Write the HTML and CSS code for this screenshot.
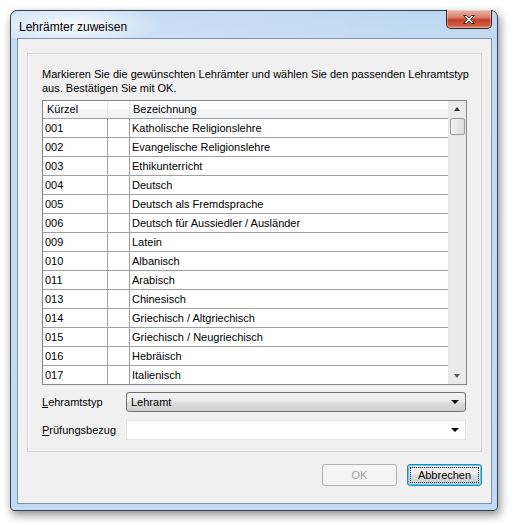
FILE: index.html
```html
<!DOCTYPE html>
<html lang="de">
<head>
<meta charset="utf-8">
<title>Lehrämter zuweisen</title>
<link rel="stylesheet" href="styles.css">
</head>
<body>
<div class="window">
  <div class="titlebar">
    <span class="title">Lehrämter zuweisen</span>
    <button class="close" aria-label="Schließen">
      <svg width="14" height="11" viewBox="0 0 14 11"><path d="M1.5 1.5h3l2.5 2.5 2.5-2.5h3l-4 4 4 4h-3l-2.5-2.5-2.5 2.5h-3l4-4z" fill="#fff" stroke="#3b2a28" stroke-width="1" stroke-linejoin="round"/></svg>
    </button>
  </div>
  <div class="client">
    <div class="panel">
      <p class="intro">Markieren Sie die gewünschten Lehrämter und wählen Sie den passenden Lehramtstyp aus. Bestätigen Sie mit OK.</p>
      <div class="list">
        <div class="grid">
          <div class="row head"><div class="c1">Kürzel</div><div class="c2"></div><div class="c3">Bezeichnung</div></div>
          <div class="row"><div class="c1">001</div><div class="c2"></div><div class="c3">Katholische Religionslehre</div></div>
          <div class="row"><div class="c1">002</div><div class="c2"></div><div class="c3">Evangelische Religionslehre</div></div>
          <div class="row"><div class="c1">003</div><div class="c2"></div><div class="c3">Ethikunterricht</div></div>
          <div class="row"><div class="c1">004</div><div class="c2"></div><div class="c3">Deutsch</div></div>
          <div class="row"><div class="c1">005</div><div class="c2"></div><div class="c3">Deutsch als Fremdsprache</div></div>
          <div class="row"><div class="c1">006</div><div class="c2"></div><div class="c3">Deutsch für Aussiedler / Ausländer</div></div>
          <div class="row"><div class="c1">009</div><div class="c2"></div><div class="c3">Latein</div></div>
          <div class="row"><div class="c1">010</div><div class="c2"></div><div class="c3">Albanisch</div></div>
          <div class="row"><div class="c1">011</div><div class="c2"></div><div class="c3">Arabisch</div></div>
          <div class="row"><div class="c1">013</div><div class="c2"></div><div class="c3">Chinesisch</div></div>
          <div class="row"><div class="c1">014</div><div class="c2"></div><div class="c3">Griechisch / Altgriechisch</div></div>
          <div class="row"><div class="c1">015</div><div class="c2"></div><div class="c3">Griechisch / Neugriechisch</div></div>
          <div class="row"><div class="c1">016</div><div class="c2"></div><div class="c3">Hebräisch</div></div>
          <div class="row"><div class="c1">017</div><div class="c2"></div><div class="c3">Italienisch</div></div>
        </div>
        <div class="vscroll">
          <div class="arrow up"></div>
          <div class="thumb"></div>
          <div class="track"></div>
          <div class="arrow down"></div>
        </div>
      </div>
      <div class="field">
        <label class="lbl"><u>L</u>ehramtstyp</label>
        <div class="combo combo-btn"><span>Lehramt</span><i class="caret"></i></div>
      </div>
      <div class="field">
        <label class="lbl"><u>P</u>rüfungsbezug</label>
        <div class="combo combo-edit"><span></span><i class="caret"></i></div>
      </div>
    </div>
    <div class="buttons">
      <button class="btn disabled">OK</button>
      <button class="btn default"><span class="focus">Abbrechen</span></button>
    </div>
  </div>
</div>
</body>
</html>
```
FILE: styles.css
```css
html, body {
  margin: 0;
  padding: 0;
  background: #ffffff;
}
body {
  width: 517px;
  height: 525px;
  overflow: hidden;
  font-family: "Liberation Sans", Arial, sans-serif;
  font-size: 11px;
  color: #000;
}
.window {
  margin: 10px 0 0 10px;
  width: 486px;
  height: 493px;
  border: 1px solid #33404f;
  border-radius: 7px 7px 4px 4px;
  background: linear-gradient(to bottom, #bcd6f1 0, #c6dcf3 40px, #c2daf3 100%);
  box-shadow: 2px 4px 10px rgba(0,0,0,0.45);
  padding: 0 5px 6px 6px;
  box-sizing: content-box;
  display: flex;
  flex-direction: column;
  width: 475px;
}
.titlebar {
  height: 27px;
  display: flex;
  align-items: flex-start;
  justify-content: space-between;
  background: radial-gradient(ellipse 90px 22px at 60px 14px, rgba(255,255,255,0.85), rgba(255,255,255,0) 100%),
              linear-gradient(to right, rgba(255,255,255,0.25), rgba(255,255,255,0));
  margin: 0 -5px 0 -6px;
  padding: 0 5px 0 6px;
  border-radius: 6px 6px 0 0;
}
.title {
  font-size: 12px;
  margin: 9px 0 0 2px;
  color: #000;
}
.close {
  width: 46px;
  height: 19px;
  margin: -1px 0 0 0;
  border: 1px solid #3d2320;
  border-top: none;
  border-radius: 0 0 5px 5px;
  background: linear-gradient(to bottom, #e9b2a6 0, #d9836f 40%, #c3402b 55%, #cf5a43 85%, #e28a6c 100%);
  padding: 0;
  display: flex;
  align-items: center;
  justify-content: center;
  box-shadow: inset 0 0 0 1px rgba(255,255,255,0.35);
}
.close svg { display: block; margin-top: 1px; }
.client {
  flex: 1;
  background: #f0f0f0;
  border: 1px solid #7f93aa;
  display: flex;
  flex-direction: column;
  padding: 14px 9px 0 9px;
}
.panel {
  border: 1px solid #d5d5d5;
  box-shadow: inset 1px 1px 0 #ffffff;
  padding: 13px 14px 11px 14px;
  height: 399px;
  box-sizing: border-box;
}
.intro {
  margin: 0;
  line-height: 14px;
  width: 440px;
  color: #000;
}
.list {
  margin-top: 5px;
  height: 285px;
  width: 425px;
  box-sizing: border-box;
  border: 1px solid #828790;
  background: #fff;
  display: flex;
  overflow: hidden;
}
.grid {
  flex: 1;
  overflow: hidden;
}
.row {
  display: flex;
  height: 19px;
  border-bottom: 1px solid #a0a0a0;
  box-sizing: border-box;
}
.row > div {
  line-height: 18px;
  white-space: nowrap;
  overflow: hidden;
}
.c1 { width: 65px; padding-left: 2px; box-sizing: border-box; border-right: 1px solid #a0a0a0; }
.c2 { width: 21px; border-right: 1px solid #a0a0a0; }
.c3 { flex: 1; padding-left: 2px; }
.row.head {
  height: 18px;
  background: linear-gradient(to bottom, #ffffff 0, #ffffff 45%, #f3f4f6 55%, #f1f2f4 100%);
  border-bottom: 1px solid #a0a0a0;
}
.row.head > div { line-height: 17px; }
.row.head .c1 { padding-left: 4px; border-right: 1px solid #e3e6ea; }
.row.head .c2 { border-right: 1px solid #e3e6ea; }
.row.head .c3 { padding-left: 3px; }
.vscroll {
  width: 17px;
  background: #eaeaea;
  border-left: 1px solid #e8e8e8;
  display: flex;
  flex-direction: column;
}
.arrow {
  height: 17px;
  position: relative;
}
.arrow::after {
  content: "";
  position: absolute;
  left: 5px;
  border-left: 3px solid transparent;
  border-right: 3px solid transparent;
}
.arrow.up::after { top: 6px; border-bottom: 4px solid #333; }
.arrow.down::after { top: 7px; border-top: 4px solid #606060; }
.thumb {
  height: 15px;
  margin: 0 1px 0 1px;
  border: 1px solid #9a9a9a;
  border-radius: 2px;
  background: linear-gradient(to right, #f2f2f2, #dcdcdc);
}
.track { flex: 1; }
.field {
  display: flex;
  align-items: center;
  margin-top: 7px;
}
.field + .field { margin-top: 8px; }
.lbl {
  width: 84px;
  color: #000;
}
.combo {
  width: 340px;
  height: 20px;
  box-sizing: border-box;
  display: flex;
  align-items: center;
  justify-content: space-between;
  padding: 0 6px 0 4px;
}
.combo-btn {
  border: 1px solid #707070;
  border-radius: 3px;
  background: linear-gradient(to bottom, #f2f2f2 0, #ebebeb 50%, #dddddd 51%, #cfcfcf 100%);
}
.combo-edit {
  border: 1px solid #e3e3e3;
  background: #fff;
}
.caret {
  width: 0;
  height: 0;
  border-left: 4px solid transparent;
  border-right: 4px solid transparent;
  border-top: 4px solid #000;
}
.buttons {
  display: flex;
  justify-content: flex-end;
  gap: 10px;
  padding: 12px 0 0 0;
}
.btn {
  width: 75px;
  height: 22px;
  font-family: "Liberation Sans", Arial, sans-serif;
  font-size: 11px;
  border-radius: 3px;
  padding: 0;
  display: flex;
  align-items: center;
  justify-content: center;
}
.btn.disabled {
  border: 1px solid #adb2b5;
  background: #f4f4f4;
  color: #a0a0a0;
}
.btn.default {
  border: 1px solid #3c7fb1;
  box-shadow: inset 0 0 0 1px #48d0fb;
  background: linear-gradient(to bottom, #eaf6fd 0, #d9f0fc 50%, #bee6fd 51%, #a7d9f5 100%);
  color: #000;
  padding: 2px;
}
.focus {
  flex: 1;
  align-self: stretch;
  display: flex;
  align-items: center;
  justify-content: center;
  border: 1px dotted #000;
  background: linear-gradient(to bottom, #f2f2f2 0, #ebebeb 50%, #dddddd 51%, #cfcfcf 100%);
}
```
